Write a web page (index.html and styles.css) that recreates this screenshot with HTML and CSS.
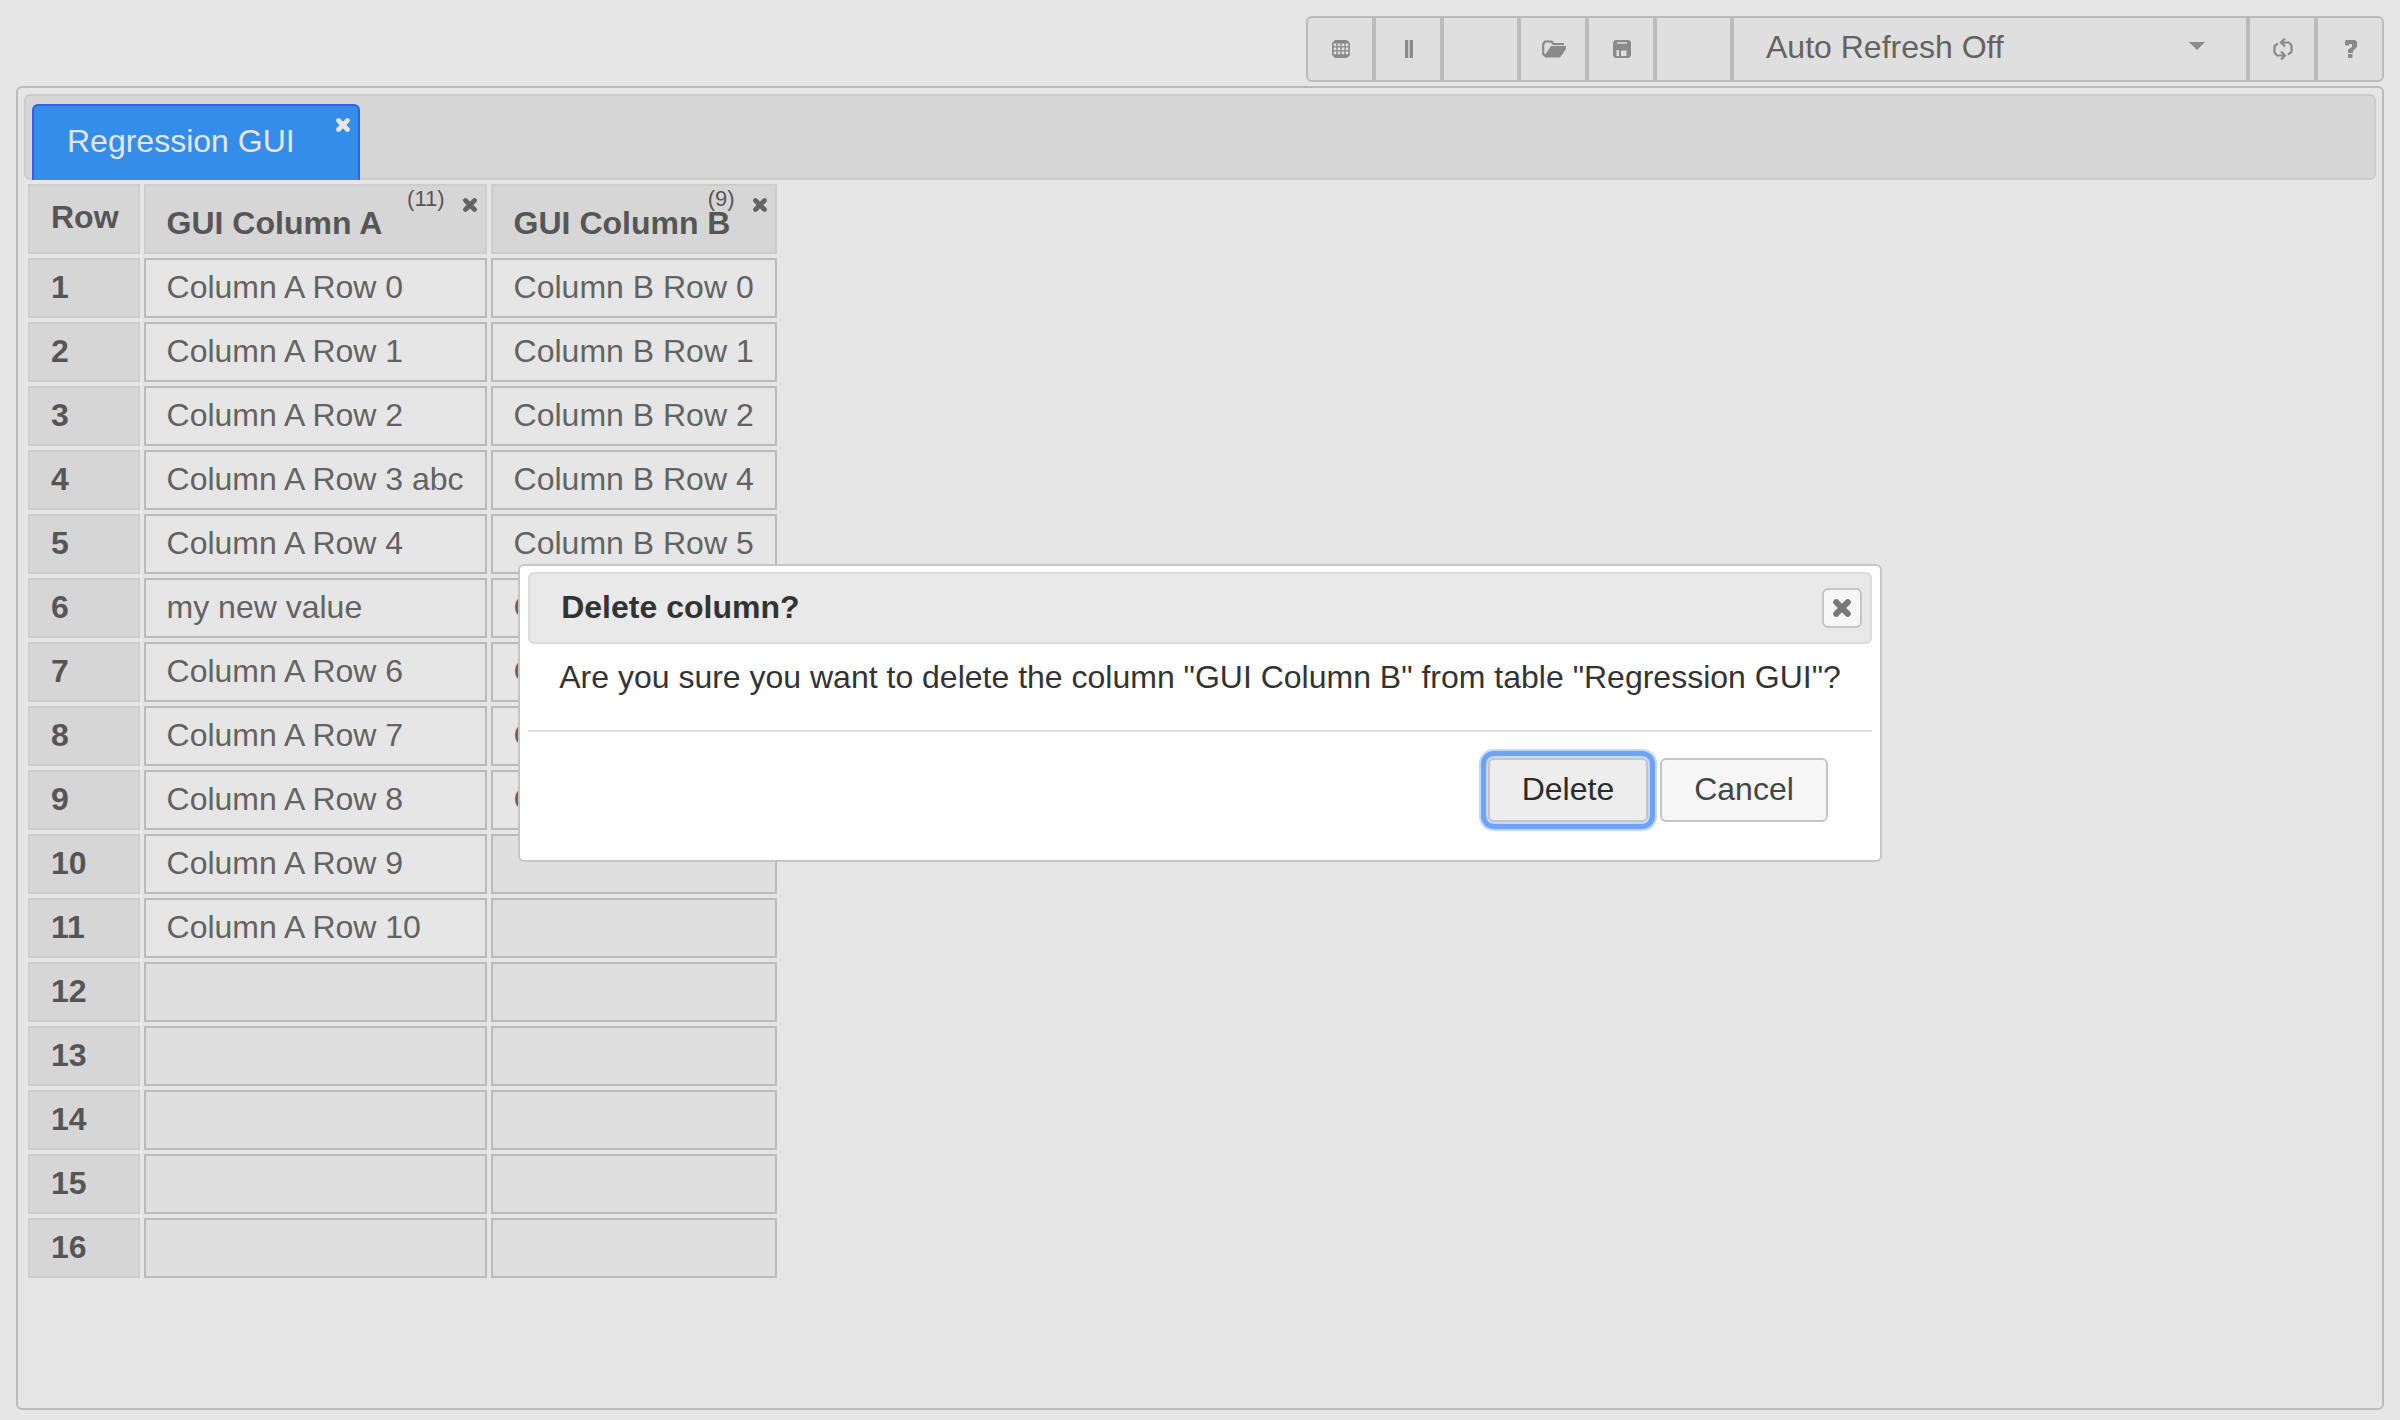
FILE: index.html
```html
<!DOCTYPE html>
<html lang="en">
<head>
<meta charset="utf-8">
<title>Regression GUI</title>
<link rel="stylesheet" href="styles.css">
</head>
<body>
<svg class="sprite" aria-hidden="true">
  <symbol id="close" viewBox="0 0 18 18"><path d="M3.200 3.200 14.800 14.800M14.800 3.200 3.200 14.800" fill="none" stroke="currentColor" stroke-width="6" stroke-linecap="round"/></symbol>
</svg>
<header class="toolbar">
  <button class="tool" aria-label="New table"><svg width="18" height="18" viewBox="0 0 18 18"><path fill="currentColor" fill-rule="evenodd" d="M3 0h12l3 3v12l-3 3H3l-3-3V3zM1.700 3.600v2.600h2.600v-2.600zM5.700 3.600v2.600h2.600v-2.600zM9.700 3.600v2.600h2.600v-2.600zM13.700 3.600v2.600h2.600v-2.600zM1.700 7.600v2.600h2.600v-2.600zM5.700 7.600v2.600h2.600v-2.600zM9.700 7.600v2.600h2.600v-2.600zM13.700 7.600v2.600h2.600v-2.600zM1.700 11.600v2.600h2.600v-2.600zM5.700 11.600v2.600h2.600v-2.600zM9.700 11.600v2.600h2.600v-2.600zM13.700 11.600v2.600h2.600v-2.600z"/></svg></button>
  <button class="tool" aria-label="New column"><svg width="8" height="18" viewBox="0 0 8 18"><path fill="currentColor" d="M0 0h3.300v18H0zM4.700 0H8v18H4.700z"/></svg></button>
  <button class="tool spacer" disabled aria-label="Separator"></button>
  <button class="tool" aria-label="Open"><svg width="24" height="18" viewBox="0 0 24 18"><path fill="none" stroke="currentColor" stroke-width="2.200" stroke-linejoin="round" d="M3 16 1.200 14V4l2-2.500h6.300L11.500 4H22"/><path fill="currentColor" d="M9 6h15v3l-6 8.500H3L2 16z"/></svg></button>
  <button class="tool" aria-label="Save"><svg width="18" height="18" viewBox="0 0 18 18"><path fill="currentColor" fill-rule="evenodd" d="M2 0h14l2 2v14l-2 2H2l-2-2V2zM4 2.200v1.600h10V2.200zM3.500 10v6H6v-6zM8 10.500V16h5.500v-5.500z"/></svg></button>
  <button class="tool spacer" disabled aria-label="Separator"></button>
  <div class="refresh">
    <select aria-label="Auto refresh"><option>Auto Refresh Off</option></select>
    <svg width="16" height="8" viewBox="0 0 16 8"><path fill="currentColor" d="M0 0h16L8 8z"/></svg>
  </div>
  <button class="tool" aria-label="Refresh"><svg width="20" height="22" viewBox="0 0 20 22"><path fill="none" stroke="currentColor" stroke-width="2.200" d="M5 5.500 1.500 8v6.500L4 17.500h7M15 16.500l3.500-2.500V7.500L16 4.500H9M12 .5 8 4.500l4 4M8 13.500l4 4-4 4"/></svg></button>
  <button class="tool" aria-label="Help"><svg width="12" height="18" viewBox="0 0 12 18"><path fill="currentColor" d="M1 0h9l2 2v5L8 11v2H3V9.500L7 7V4H4v1.500H0V1zM3 14h4.500v4H3z"/></svg></button>
</header>

<main class="panel">
  <nav class="tabs">
    <div class="tab">
      <a href="#table">Regression GUI</a>
      <button class="remove" aria-label="Close table"><svg width="14" height="14"><use href="#close"/></svg></button>
    </div>
  </nav>
  <table id="table">
    <thead><tr>
      <th scope="col">Row</th>
      <th scope="col" class="column">GUI Column A<span class="count">(11)</span><button class="remove" aria-label="Delete GUI Column A"><svg width="14" height="14"><use href="#close"/></svg></button></th>
      <th scope="col" class="column">GUI Column B<span class="count">(9)</span><button class="remove" aria-label="Delete GUI Column B"><svg width="14" height="14"><use href="#close"/></svg></button></th>
    </tr></thead>
    <tbody>
      <tr><th scope="row">1</th><td>Column A Row 0</td><td>Column B Row 0</td></tr>
      <tr><th scope="row">2</th><td>Column A Row 1</td><td>Column B Row 1</td></tr>
      <tr><th scope="row">3</th><td>Column A Row 2</td><td>Column B Row 2</td></tr>
      <tr><th scope="row">4</th><td>Column A Row 3 abc</td><td>Column B Row 4</td></tr>
      <tr><th scope="row">5</th><td>Column A Row 4</td><td>Column B Row 5</td></tr>
      <tr><th scope="row">6</th><td>my new value</td><td>C</td></tr>
      <tr><th scope="row">7</th><td>Column A Row 6</td><td>C</td></tr>
      <tr><th scope="row">8</th><td>Column A Row 7</td><td>C</td></tr>
      <tr><th scope="row">9</th><td>Column A Row 8</td><td>C</td></tr>
      <tr><th scope="row">10</th><td>Column A Row 9</td><td></td></tr>
      <tr><th scope="row">11</th><td>Column A Row 10</td><td></td></tr>
      <tr><th scope="row">12</th><td></td><td></td></tr>
      <tr><th scope="row">13</th><td></td><td></td></tr>
      <tr><th scope="row">14</th><td></td><td></td></tr>
      <tr><th scope="row">15</th><td></td><td></td></tr>
      <tr><th scope="row">16</th><td></td><td></td></tr>
    </tbody>
  </table>
</main>

<div class="overlay">
  <section class="dialog" role="dialog" aria-modal="true" aria-labelledby="dialog-title">
    <div class="titlebar">
      <h2 id="dialog-title">Delete column?</h2>
      <button class="dismiss" aria-label="Close"><svg width="18" height="18"><use href="#close"/></svg></button>
    </div>
    <p class="message">Are you sure you want to delete the column "GUI Column B" from table "Regression GUI"?</p>
    <div class="actions">
      <button class="action focused">Delete</button>
      <button class="action">Cancel</button>
    </div>
  </section>
</div>
</body>
</html>
```
FILE: styles.css
```css
* { box-sizing: border-box; }

body {
  display: flex;
  flex-direction: column;
  min-height: 100vh;
  margin: 0;
  padding: 16px 16px 10px;
  background: #e6e6e6;
  color: #636363;
  font: 32px/36px "Liberation Sans", Arial, sans-serif;
}

button, select {
  margin: 0;
  padding: 0;
  font: inherit;
  color: inherit;
  background: none;
  border: 0;
}

svg { display: block; }
.sprite { position: absolute; width: 0; height: 0; }

/* Toolbar */
.toolbar {
  display: flex;
  align-self: flex-end;
  height: 66px;
  margin-bottom: 4px;
  color: #8a8a8a;
}

.tool {
  display: grid;
  place-items: center;
  width: 68px;
  padding-left: 2px;
  background: #dfdfdf;
  border: 2px solid #bbb;
}
.tool:first-child { border-radius: 6px 0 0 6px; }
.tool:last-child { border-radius: 0 6px 6px 0; }
.spacer { width: 77px; }

.refresh {
  display: grid;
  align-items: center;
  width: 516px;
  background: #dfdfdf;
  border: 2px solid #bbb;
}
.refresh > * { grid-area: 1 / 1; }
.refresh svg { justify-self: end; margin: 0 41px 6px 0; pointer-events: none; }
.refresh select {
  width: 100%;
  height: 100%;
  padding: 0 32px 4px;
  appearance: none;
  color: #636363;
}

/* Table panel */
.panel {
  flex: 1;
  padding: 6px;
  border: 2px solid #bbb;
  border-radius: 6px;
}

.tabs {
  display: flex;
  padding: 8px 6px 0;
  background: #d6d6d6;
  border: 2px solid #cdcdcd;
  border-radius: 6px;
}
.tab {
  position: relative;
  margin-bottom: -2px;
  padding: 17px 63px 21px 33px;
  background: #348de8;
  border: 2px solid #2f60e8;
  border-bottom: 0;
  border-radius: 6px 6px 0 0;
  color: #e6e6e6;
}
.tab a { color: inherit; text-decoration: none; }
.remove { position: absolute; top: 12px; right: 8px; }

table { border-spacing: 4px; }
th, td {
  height: 60px;
  padding: 9px 21px 11px;
  text-align: left;
  vertical-align: top;
  border: 2px solid #bbb;
}
th {
  padding-right: 19px;
  background: #d6d6d6;
  border-color: #cdcdcd;
  color: #565656;
}
thead th { height: 70px; padding-top: 13px; }
thead .column { position: relative; padding-top: 19px; }
td:empty { background: #dfdfdf; }
.count {
  position: absolute;
  top: 0;
  right: 40px;
  font-size: 22px;
  font-weight: 400;
  line-height: 26px;
}
.column .remove { color: #636363; }

/* Confirmation dialog */
.overlay {
  position: fixed;
  inset: 0;
  display: grid;
  place-items: center;
  padding-top: 6px;
}
.dialog {
  padding: 6px 8px 38px;
  background: #fff;
  border: 2px solid #c5c5c5;
  border-radius: 6px;
  color: #333;
}
.titlebar {
  display: flex;
  justify-content: space-between;
  padding: 14px 8px 14px 31px;
  background: #e9e9e9;
  border: 2px solid #ddd;
  border-radius: 6px;
}
h2 { margin: 0; font-size: 32px; line-height: 38px; }
.dismiss {
  display: grid;
  place-items: center;
  width: 40px;
  height: 40px;
  background: #f6f6f6;
  border: 2px solid #c5c5c5;
  border-radius: 6px;
  color: #777;
}
.message { margin: 0; padding: 15px 31px 35px; }
.actions {
  display: flex;
  justify-content: flex-end;
  gap: 12px;
  padding: 26px 44px 0;
  border-top: 2px solid #ddd;
}
.action {
  height: 64px;
  padding: 0 32px 2px;
  background: #f6f6f6;
  border: 2px solid #c5c5c5;
  border-radius: 6px;
  color: #454545;
}
.focused {
  background: #ededed;
  color: #2b2b2b;
  box-shadow: 0 0 0 2px #c3d8fc, 0 0 0 7px #6ea1fa, 0 0 0 9px #c3d8fc;
}
```
